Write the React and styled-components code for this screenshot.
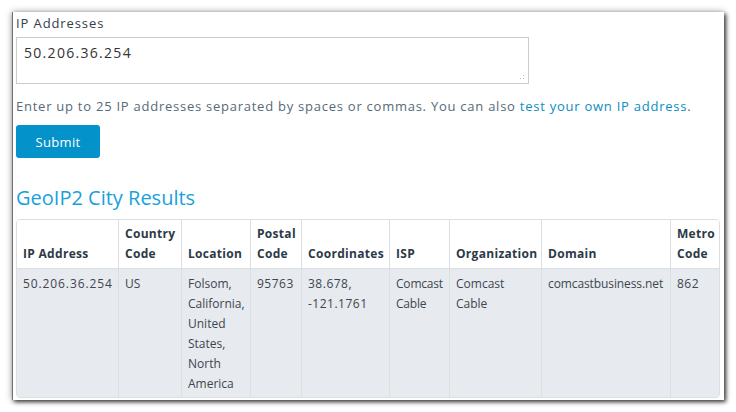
import React from 'react';
import styled, { createGlobalStyle } from 'styled-components';

const GlobalStyle = createGlobalStyle`
    html, body {
        margin: 0;
        padding: 0;
        background: #ffffff;
    }
    body {
        font-family: "Open Sans", "Liberation Sans", sans-serif;
    }
`;

const Page = styled.div`
    width: 736px;
    height: 412px;
    padding: 12px;
    box-sizing: border-box;
`;

const Window = styled.div`
    width: 712px;
    height: 388px;
    background: #ffffff;
    overflow: hidden;
    box-sizing: border-box;
    padding: 3px 4px 0 3px;
    border-left: 1px solid #707070;
    box-shadow: 2px 2px 4px rgba(0,0,0,0.7), 0 0 7px rgba(0,0,0,0.35);
`;

const Label = styled.div`
    font-size: 13px;
    line-height: 16px;
    letter-spacing: 0.9px;
    color: #33404b;
    margin: 0 0 6px 0;
`;

const TextArea = styled.div`
    position: relative;
    width: 513px;
    height: 47px;
    box-sizing: border-box;
    border: 1px solid #c9cbcd;
    padding: 5px 7px;
    font-size: 14px;
    letter-spacing: 1.3px;
    color: #333;
`;

const Grip = styled.span`
    position: absolute;
    right: 2px;
    bottom: 2px;
    width: 10px;
    height: 10px;
    background:
        radial-gradient(circle, #b8b8b8 0.8px, transparent 1px) 0 0 / 3px 3px;
    clip-path: polygon(100% 0, 100% 100%, 0 100%);
`;

const Help = styled.p`
    font-size: 13px;
    line-height: 18px;
    letter-spacing: 0.75px;
    color: #566a78;
    margin: 13px 0 10px 0;
    white-space: nowrap;
`;

const Link = styled.a`
    color: #0b8dc2;
    text-decoration: none;
`;

const SubmitButton = styled.button`
    width: 84px;
    height: 33px;
    border: none;
    border-radius: 3px;
    background: #0392c9;
    color: #ffffff;
    font-family: inherit;
    font-size: 13px;
    letter-spacing: 0.3px;
    padding: 0;
`;

const Heading = styled.h2`
    font-size: 20px;
    font-weight: 400;
    color: #18a1da;
    margin: 27px 0 8px 0;
    line-height: 26px;
`;

const Table = styled.table`
    width: 704px;
    box-sizing: border-box;
    table-layout: fixed;
    border-collapse: separate;
    border-spacing: 0;
    border: 1px solid #dcdfe2;
    border-radius: 4px;
    overflow: hidden;
    font-size: 12px;
`;

const HeadCell = styled.th`
    text-align: left;
    vertical-align: bottom;
    font-weight: 700;
    color: #2c3a47;
    line-height: 20px;
    letter-spacing: 0.3px;
    padding: 4px 6px 4px 6px;
    background: #ffffff;
    border-left: ${p => (p.$first ? 'none' : '1px solid #dcdfe2')};
    border-bottom: 1px solid #dcdfe2;
    white-space: nowrap;
`;

const Cell = styled.td`
    vertical-align: top;
    color: #3d4650;
    line-height: 20px;
    padding: 5px 6px 3px 6px;
    background: #e7eaee;
    border-left: ${p => (p.$first ? 'none' : '1px solid #dcdfe2')};
    white-space: nowrap;
    letter-spacing: ${p => p.$spacing || 0};
`;

const columns = [
    { key: 'ip', title: 'IP Address', width: 101, spacing: '0.9px' },
    { key: 'country', title: <>Country<br />Code</>, width: 63 },
    { key: 'location', title: 'Location', width: 69 },
    { key: 'postal', title: <>Postal<br />Code</>, width: 51, spacing: '0.5px' },
    { key: 'coords', title: 'Coordinates', width: 88, spacing: '0.5px' },
    { key: 'isp', title: 'ISP', width: 60, spacing: '-0.2px' },
    { key: 'org', title: 'Organization', width: 92 },
    { key: 'domain', title: 'Domain', width: 129, spacing: '-0.1px' },
    { key: 'metro', title: <>Metro<br />Code</>, width: 49, spacing: '0.5px' },
];

const row = {
    ip: '50.206.36.254',
    country: 'US',
    location: <>Folsom,<br />California,<br />United<br />States,<br />North<br />America</>,
    postal: '95763',
    coords: <>38.678,<br />-121.1761</>,
    isp: <>Comcast<br />Cable</>,
    org: <>Comcast<br />Cable</>,
    domain: 'comcastbusiness.net',
    metro: '862',
};

const App = () => {
    return (
        <Page>
            <GlobalStyle />
            <Window>
                <Label>IP Addresses</Label>
                <TextArea>
                    50.206.36.254
                    <Grip />
                </TextArea>
                <Help>
                    Enter up to 25 IP addresses separated by spaces or commas. You can also{' '}
                    <Link href="#">test your own IP address</Link>.
                </Help>
                <SubmitButton>Submit</SubmitButton>
                <Heading>GeoIP2 City Results</Heading>
                <Table>
                    <colgroup>
                        {columns.map(c => <col key={c.key} style={{ width: c.width }} />)}
                    </colgroup>
                    <thead>
                        <tr>
                            {columns.map((c, i) => (
                                <HeadCell key={c.key} $first={i === 0}>{c.title}</HeadCell>
                            ))}
                        </tr>
                    </thead>
                    <tbody>
                        <tr>
                            {columns.map((c, i) => (
                                <Cell key={c.key} $first={i === 0} $spacing={c.spacing}>{row[c.key]}</Cell>
                            ))}
                        </tr>
                    </tbody>
                </Table>
            </Window>
        </Page>
    );
};

export default App;
